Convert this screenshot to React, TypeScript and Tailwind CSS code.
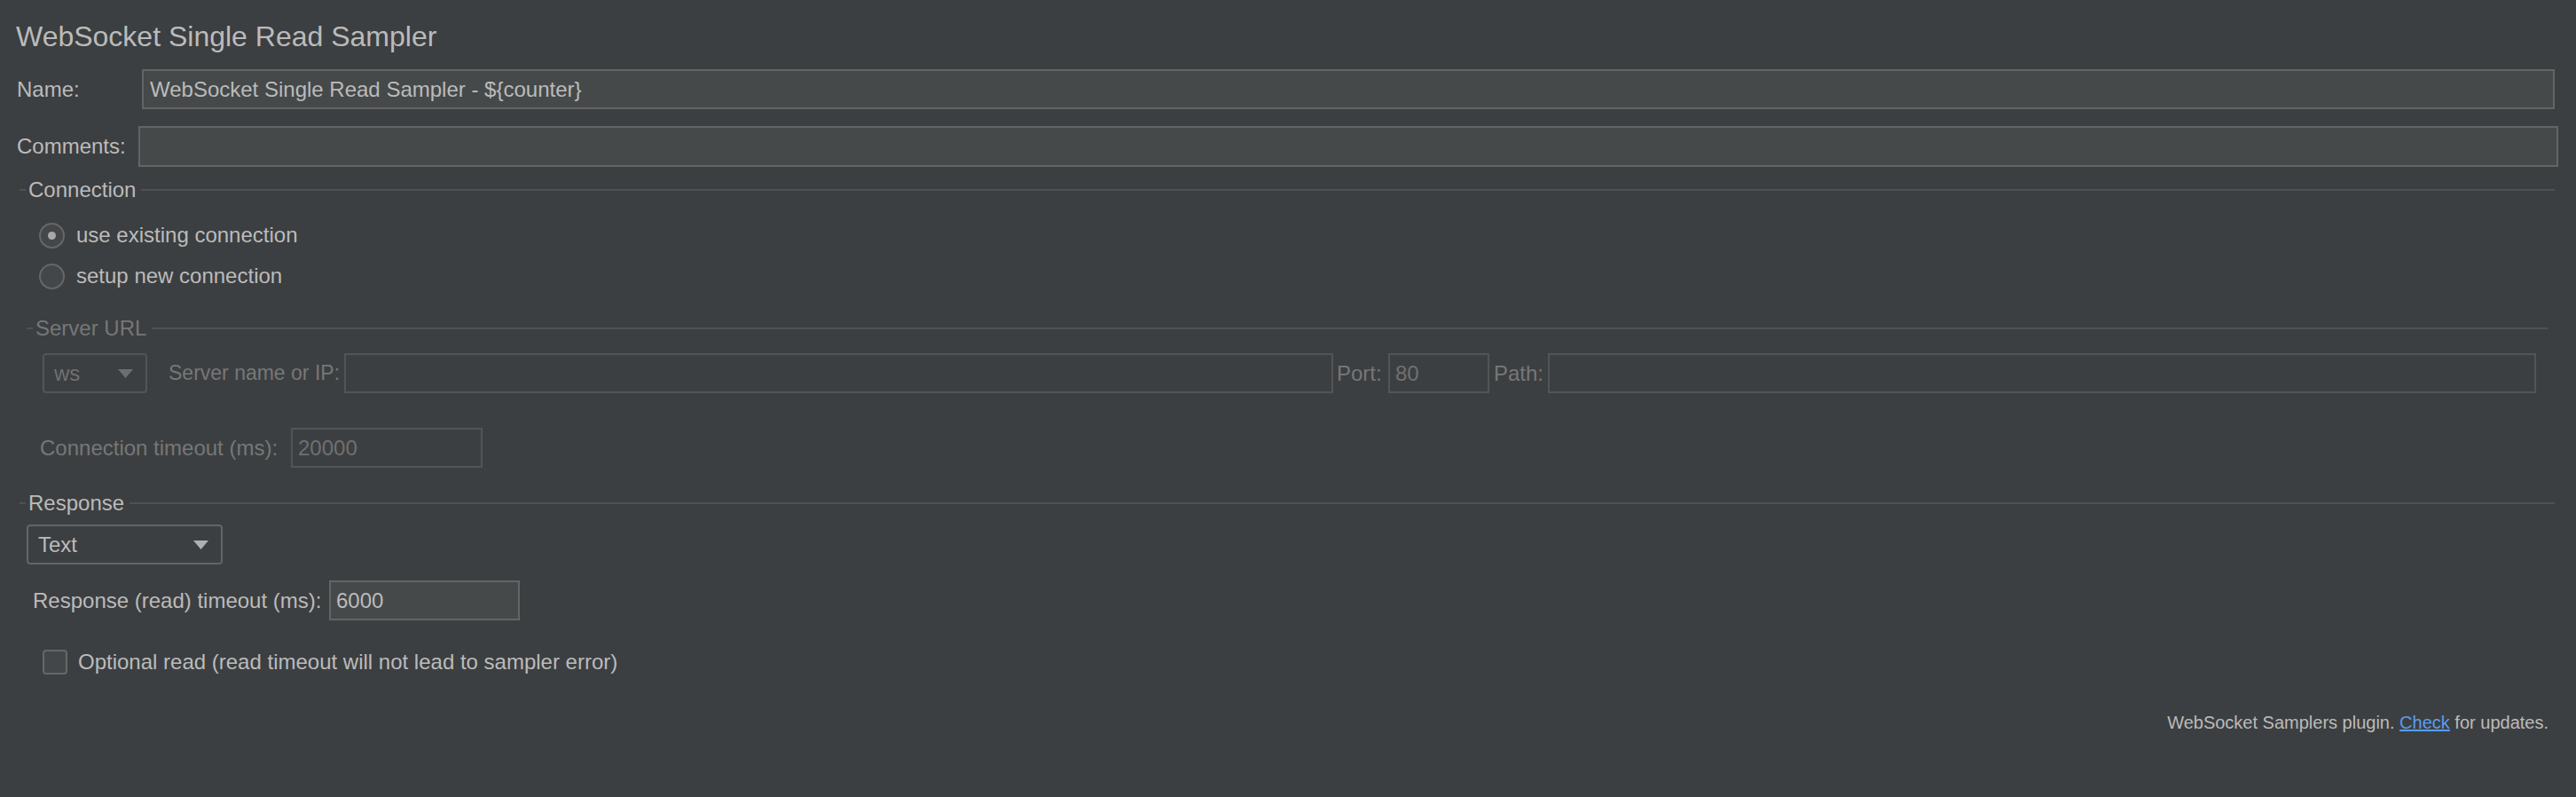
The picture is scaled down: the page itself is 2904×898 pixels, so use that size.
import React from 'react';

function TitledLine({ title, left, right, disabled }: { title: string; left: string; right: string; disabled?: boolean }) {
  return (
    <div className={`flex items-center h-[30px] ${left} ${right}`}>
      <div className="w-[7px] h-[2px] bg-[#515151]" />
      <span className={`ml-[3px] leading-[30px] whitespace-nowrap ${disabled ? 'text-[#777777]' : 'text-[#bbbbbb]'}`}>{title}</span>
      <div className="ml-[6px] flex-1 h-[2px] bg-[#515151]" />
    </div>
  );
}

function Combo({ value, disabled, width }: { value: string; disabled?: boolean; width: string }) {
  return (
    <div
      className={`${width} h-[45px] flex items-center justify-between pl-[11px] pr-[14px] rounded-[4px] border-2 ${
        disabled ? 'border-[#545454] text-[#707070]' : 'border-[#646464] text-[#bbbbbb]'
      }`}
    >
      <span>{value}</span>
      <svg width="17" height="10" viewBox="0 0 17 10">
        <polygon points="0,0 17,0 8.5,10" fill={disabled ? '#6e6e6e' : '#b0b0b0'} />
      </svg>
    </div>
  );
}

function Field({ value, width, disabled }: { value?: string; width: string; disabled?: boolean }) {
  return (
    <div
      className={`${width} h-[45px] flex items-center pl-[6px] border-2 ${
        disabled ? 'border-[#545454] bg-[#3c3f41] text-[#707070]' : 'border-[#646464] bg-[#45494a] text-[#bbbbbb]'
      }`}
    >
      {value}
    </div>
  );
}

function Radio({ label, checked }: { label: string; checked?: boolean }) {
  return (
    <div className="flex items-center h-[46px] pl-[44px]">
      <div className="w-[29px] h-[29px] rounded-full border-2 border-[#676767] bg-[#43474a] flex items-center justify-center">
        {checked && <div className="w-[9px] h-[9px] rounded-full bg-[#a8a8a8]" />}
      </div>
      <span className="ml-[13px]">{label}</span>
    </div>
  );
}

export default function App() {
  return (
    <div className="w-[2904px] h-[898px] overflow-hidden bg-[#3c3f41] text-[#bbbbbb] text-[24px] font-['Liberation_Sans',Arial,sans-serif]">
      <div className="pt-[21px] pl-[18px] h-[61px] text-[32px] leading-[40px]">WebSocket Single Read Sampler</div>

      {/* name / comments */}
      <div className="mt-[17px] flex items-center h-[45px] pl-[19px] pr-[24px]">
        <span className="w-[141px]">Name:</span>
        <div className="flex-1 h-[45px] flex items-center pl-[7px] border-2 border-[#646464] bg-[#45494a]">
          WebSocket Single Read Sampler - ${'{counter}'}
        </div>
      </div>
      <div className="mt-[19px] flex items-center h-[46px] pl-[19px] pr-[20px]">
        <span className="w-[137px]">Comments:</span>
        <div className="flex-1 h-[46px] border-2 border-[#646464] bg-[#45494a]" />
      </div>

      {/* connection */}
      <div className="mt-[11px]">
        <TitledLine title="Connection" left="pl-[22px]" right="pr-[24px]" />
      </div>
      <div className="mt-[13px]">
        <Radio label="use existing connection" checked />
        <Radio label="setup new connection" />
      </div>

      <div className="mt-[21px]">
        <TitledLine title="Server URL" left="pl-[30px]" right="pr-[32px]" disabled />
      </div>
      <div className="mt-[13px] flex items-center h-[45px] pl-[48px] pr-[45px] text-[#777777]">
        <Combo value="ws" disabled width="w-[118px]" />
        <span className="ml-[24px] w-[198px] text-[23px] whitespace-nowrap">Server name or IP:</span>
        <Field width="w-[1115px]" disabled />
        <span className="ml-[4px] w-[58px]">Port:</span>
        <Field width="w-[114px]" value="80" disabled />
        <span className="ml-[5px] w-[61px]">Path:</span>
        <Field width="flex-1" disabled />
      </div>
      <div className="mt-[39px] flex items-center h-[45px] pl-[45px] text-[#777777]">
        <span className="w-[283px] whitespace-nowrap">Connection timeout (ms):</span>
        <Field width="w-[216px]" value="20000" disabled />
      </div>

      {/* response */}
      <div className="mt-[25px]">
        <TitledLine title="Response" left="pl-[22px]" right="pr-[24px]" />
      </div>
      <div className="mt-[9px] pl-[30px]">
        <Combo value="Text" width="w-[221px]" />
      </div>
      <div className="mt-[18px] flex items-center h-[45px] pl-[37px]">
        <span className="w-[334px] whitespace-nowrap">Response (read) timeout (ms):</span>
        <Field width="w-[215px]" value="6000" />
      </div>
      <div className="mt-[24px] flex items-center h-[45px] pl-[48px]">
        <div className="w-[28px] h-[28px] rounded-[4px] border-2 border-[#666666] bg-[#43474a]" />
        <span className="ml-[12px]">Optional read (read timeout will not lead to sampler error)</span>
      </div>

      <div className="mt-[34px] pr-[31px] text-right text-[20px] leading-[24px]">
        WebSocket Samplers plugin. <span className="text-[#589df6] underline">Check</span> for updates.
      </div>
    </div>
  );
}
